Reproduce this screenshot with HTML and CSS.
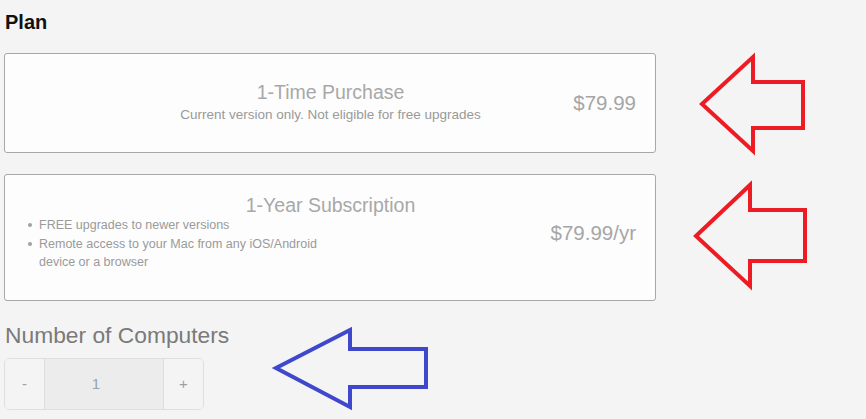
FILE: index.html
```html
<!DOCTYPE html>
<html lang="en">
<head>
    <meta charset="UTF-8">
    <meta name="viewport" content="width=device-width, initial-scale=1.0">
    <title>Plan</title>
    <link rel="stylesheet" href="styles.css">
</head>
<body>
    <div class="page">
        <h2 class="section-title">Plan</h2>

        <div class="plan-card plan-once">
            <div class="plan-main">
                <div class="plan-name">1-Time Purchase</div>
                <div class="plan-note">Current version only. Not eligible for free upgrades</div>
            </div>
            <div class="plan-price">$79.99</div>
        </div>

        <div class="plan-card plan-sub">
            <div class="plan-main">
                <div class="plan-name">1-Year Subscription</div>
                <ul class="plan-features">
                    <li>FREE upgrades to newer versions</li>
                    <li>Remote access to your Mac from any iOS/Android device or a browser</li>
                </ul>
            </div>
            <div class="plan-price">$79.99/yr</div>
        </div>

        <h3 class="count-title">Number of Computers</h3>
        <div class="stepper">
            <button class="step-btn">-</button>
            <div class="step-value">1</div>
            <button class="step-btn">+</button>
        </div>
    </div>

    <!-- annotation arrows drawn over the page -->
    <svg class="marks" width="866" height="419" viewBox="0 0 866 419">
        <polygon points="702,104 753,57 753,82 803,82 803,128 753,128 753,151" fill="none" stroke="#ed1c24" stroke-width="4"/>
        <polygon points="696,236 750,185 750,210 805,210 805,261 750,261 750,286" fill="none" stroke="#ed1c24" stroke-width="4"/>
        <polygon points="276,368 350,330 350,349 426,349 426,387 350,387 350,407" fill="none" stroke="#3f48cc" stroke-width="4"/>
    </svg>
</body>
</html>
```

FILE: styles.css
```css
body {
    margin: 0;
    background-color: #f4f4f4;
    font-family: "Liberation Sans", Arial, sans-serif;
    color: #999;
}
.page {
    width: 652px;
    padding: 10px 4px 0;
}
.section-title {
    margin: 0 0 19px 1px;
    font-size: 20px;
    line-height: 24px;
    font-weight: bold;
    color: #111;
}
.plan-card {
    display: grid;
    background-color: #fdfdfd;
    border: 1px solid #a8a8a8;
    border-radius: 3px;
    padding: 27px 19px 28px 20px;
    margin-bottom: 21px;
}
.plan-card.plan-sub {
    padding-top: 19px;
    padding-bottom: 28px;
}
.plan-main,
.plan-price {
    grid-area: 1 / 1;
}
.plan-main {
    text-align: center;
}
.plan-name {
    font-size: 19.5px;
    line-height: 22px;
    color: #a8a8a8;
}
.plan-note {
    margin-top: 3px;
    font-size: 13.5px;
    line-height: 18px;
    color: #9a9a9a;
}
.plan-price {
    justify-self: end;
    align-self: center;
    font-size: 20.5px;
    color: #a6a6a6;
}
.plan-features {
    list-style: none;
    margin: 0;
    padding: 0;
    width: 300px;
    text-align: left;
    font-size: 12.5px;
    line-height: 18.5px;
    color: #9a9a9a;
}
.plan-features li {
    position: relative;
    padding-left: 14px;
}
.plan-features li::before {
    content: "";
    position: absolute;
    left: 3px;
    top: 7px;
    width: 4px;
    height: 4px;
    border-radius: 50%;
    background-color: #a0a0a0;
}
.count-title {
    margin: 0 0 10px 1px;
    font-size: 22.8px;
    line-height: 26px;
    font-weight: normal;
    color: #7a7a7a;
}
.stepper {
    display: flex;
    width: 198px;
    height: 50px;
    border: 1px solid #dedede;
    border-radius: 5px;
    overflow: hidden;
}
.step-btn {
    width: 39px;
    border: none;
    background-color: #f4f4f4;
    font-family: "Liberation Sans", Arial, sans-serif;
    font-size: 15px;
    color: #a0a0a0;
    padding: 0;
}
.step-value {
    flex: 1;
    display: flex;
    align-items: center;
    justify-content: center;
    padding-right: 16px;
    background-color: #ececec;
    border-left: 1px solid #dedede;
    border-right: 1px solid #dedede;
    font-size: 15px;
    color: #97a3ad;
}
.marks {
    position: absolute;
    top: 0;
    left: 0;
}
```
